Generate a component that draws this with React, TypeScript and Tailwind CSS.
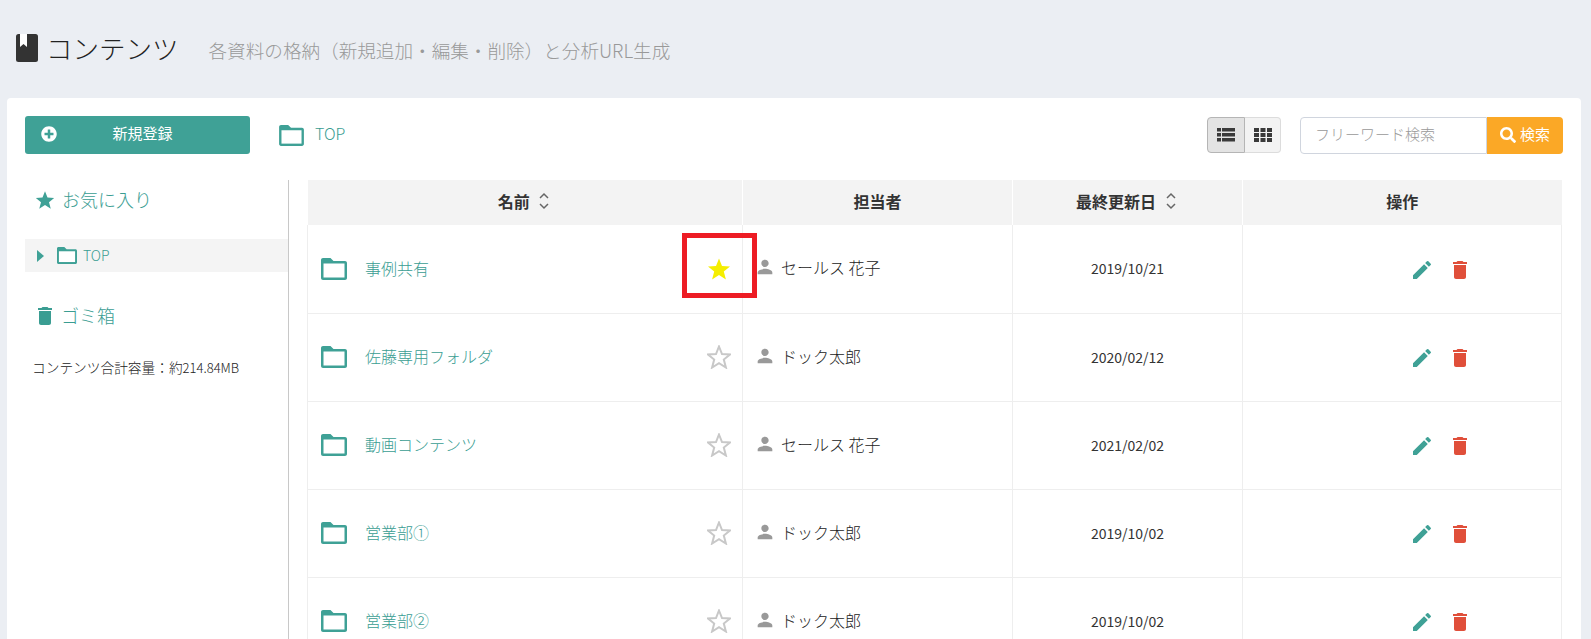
import { FaPlusCircle, FaSearch } from "react-icons/fa";
import { MdDelete, MdEdit, MdPerson } from "react-icons/md";

const rows = [
  { name: "事例共有", owner: "セールス 花子", date: "2019/10/21", fav: true },
  { name: "佐藤専用フォルダ", owner: "ドック太郎", date: "2020/02/12", fav: false },
  { name: "動画コンテンツ", owner: "セールス 花子", date: "2021/02/02", fav: false },
  { name: "営業部①", owner: "ドック太郎", date: "2019/10/02", fav: false },
  { name: "営業部②", owner: "ドック太郎", date: "2019/10/02", fav: false },
];

const starPoints = "12,1.5 15,9 23,9.500 16.800,14.600 18.900,22.500 12,18.100 5.100,22.500 7.200,14.600 1,9.500 9,9";

function FolderIcon({ className }: { className?: string }) {
  return (
    <svg viewBox="0 0 26 22" className={className} fill="none">
      <path d="M0 4V2C0 .9 .9 0 2 0h7.500l3 3H24c1.100 0 2 .9 2 2v15c0 1.100-.9 2-2 2H2c-1.100 0-2-.9-2-2V4z" fill="#3fa196" />
      <rect x="2.500" y="5.500" width="21" height="14" fill="#fff" />
    </svg>
  );
}

function SortIcon() {
  return (
    <svg viewBox="0 0 12 20" className="w-[12px] h-[20px]" fill="none" stroke="#666" strokeWidth="1.500">
      <path d="M2 7l4-4 4 4" />
      <path d="M2 13l4 4 4-4" />
    </svg>
  );
}

function BookIcon() {
  return (
    <svg viewBox="0 0 22 28" className="w-[22px] h-[28px]">
      <rect width="22" height="28" rx="2.500" fill="#333" />
      <path d="M4 0h7v13l-3.500-3L4 13z" fill="#fff" />
    </svg>
  );
}

function ListIcon() {
  return (
    <svg viewBox="0 0 18 14" className="w-[18px] h-[14px]" fill="#3a3a3a">
      <rect y="0" width="4" height="3.500" />
      <rect x="5" y="0" width="13" height="3.500" />
      <rect y="5" width="4" height="3.500" />
      <rect x="5" y="5" width="13" height="3.500" />
      <rect y="10" width="4" height="3.500" />
      <rect x="5" y="10" width="13" height="3.500" />
    </svg>
  );
}

function GridIcon() {
  return (
    <svg viewBox="0 0 18 14" className="w-[18px] h-[14px]" fill="#3a3a3a">
      {[0, 5, 10].map((y) =>
        [0, 6.500, 13].map((x) => <rect key={`${x}-${y}`} x={x} y={y} width="5" height="4" />)
      )}
    </svg>
  );
}

export default function App() {
  return (
    <div className="h-[639px] overflow-hidden bg-[#ebeef3] font-['Noto_Sans_CJK_JP','Noto_Sans',sans-serif] text-[#333]">
      <header className="h-[98px] pl-[16px] pt-[28px] flex items-start">
        <div className="flex items-center h-[40px]">
          <BookIcon />
          <h1 className="ml-[8px] text-[26.500px] font-light leading-none text-[#222]">コンテンツ</h1>
          <p className="ml-[30px] mt-[3px] text-[18.600px] font-light text-[#999]">各資料の格納（新規追加・編集・削除）と分析URL生成</p>
        </div>
      </header>

      <main className="relative ml-[7px] mr-[10px] h-[541px] bg-white rounded-t-[4px] overflow-hidden">
        <div className="flex items-center h-[38px] mt-[18px] pl-[18px] pr-[18px]">
          <button className="relative w-[225px] h-[38px] pl-[10px] pb-[3px] rounded-[3px] bg-[#3fa196] text-white text-[15px] flex items-center justify-center">
            <FaPlusCircle className="absolute left-[16px] top-[10px] text-[16px]" />
            新規登録
          </button>
          <FolderIcon className="ml-[29px] w-[25px] h-[21px]" />
          <span className="ml-[11px] pb-[4px] text-[16px] font-light text-[#3a9d92]">TOP</span>

          <div className="ml-auto flex h-[36px]">
            <div className="w-[38px] flex items-center justify-center rounded-l-[4px] border border-[#b5b5b5] bg-[#e3e3e3]">
              <ListIcon />
            </div>
            <div className="w-[36px] flex items-center justify-center rounded-r-[4px] border border-l-0 border-[#dcdcdc] bg-[#f3f3f3]">
              <GridIcon />
            </div>
          </div>

          <div className="ml-[19px] flex h-[37px]">
            <div className="w-[187px] flex items-center pl-[14px] pb-[1px] rounded-l-[4px] border border-[#d0d5de] text-[15px] font-light text-[#999]">
              フリーワード検索
            </div>
            <button className="w-[76px] flex items-center justify-center gap-[4px] pb-[1px] rounded-r-[4px] bg-[#fba826] text-white text-[15px]">
              <FaSearch className="text-[16px]" />
              検索
            </button>
          </div>
        </div>

        <div className="flex mt-[26px]">
          <aside className="w-[264px] shrink-0 ml-[18px] h-[460px] border-r border-[#c8c8c8]">
            <div className="flex items-center h-[40px] pl-[10px] text-[#3a9d92]">
              <svg viewBox="0 0 24 24" className="w-[20px] h-[20px]">
                <polygon points={starPoints} fill="#3fa196" />
              </svg>
              <span className="ml-[7px] pb-[1px] text-[18px] font-light">お気に入り</span>
            </div>
            <div className="flex items-center h-[33px] mt-[19px] pl-[12px] bg-[#f4f4f4] text-[#3a9d92]">
              <svg viewBox="0 0 7 12" className="w-[7px] h-[12px]">
                <path d="M0 0l7 6-7 6z" fill="#3fa196" />
              </svg>
              <FolderIcon className="ml-[13px] w-[20px] h-[17px]" />
              <span className="ml-[6px] text-[14px] font-light">TOP</span>
            </div>
            <div className="flex items-center h-[40px] mt-[24px] pl-[8px] text-[#3a9d92]">
              <MdDelete className="text-[24px]" />
              <span className="ml-[4px] pb-[2px] text-[18px] font-light">ゴミ箱</span>
            </div>
            <p className="mt-[21px] pl-[7px] text-[13.700px] font-light text-[#222]">
              コンテンツ合計容量：約<span className="text-[13px]">214.84MB</span>
            </p>
          </aside>

          <table className="ml-[18px] w-[1255px] table-fixed border-collapse self-start">
            <thead>
              <tr className="h-[45px] bg-[#f3f3f3] text-[16px] font-bold text-[#333]">
                <th className="w-[435px] pb-[3px]">
                  <span className="inline-flex items-center gap-[8px] -ml-[2px]">名前 <SortIcon /></span>
                </th>
                <th className="w-[270px] border-l border-white pb-[3px]">担当者</th>
                <th className="w-[230px] border-l border-white pb-[3px]">
                  <span className="inline-flex items-center gap-[9px] -ml-[2px]">最終更新日 <SortIcon /></span>
                </th>
                <th className="border-l border-white pb-[3px]">操作</th>
              </tr>
            </thead>
            <tbody>
              {rows.map((row) => (
                <tr key={row.name + row.date} className="h-[88px] border-b border-l border-[#eeeeee]">
                  <td className="border-r border-[#eeeeee]">
                    <div className="flex items-center pl-[13px] pr-[11px]">
                      <FolderIcon className="w-[26px] h-[22px]" />
                      <span className="ml-[18px] pb-[2px] text-[16px] font-light text-[#3a9d92]">{row.name}</span>
                      <svg viewBox="0 0 24 24" className="ml-auto w-[24px] h-[24px]">
                        {row.fav ? (
                          <polygon points={starPoints} fill="#f5ee00" />
                        ) : (
                          <polygon points={starPoints} fill="none" stroke="#c8c8c8" strokeWidth="2" />
                        )}
                      </svg>
                    </div>
                  </td>
                  <td className="border-r border-[#eeeeee]">
                    <div className="flex items-center pl-[11px] pb-[3px]">
                      <MdPerson className="text-[22px] text-[#999]" />
                      <span className="ml-[5px] text-[16px] font-light text-[#222]">{row.owner}</span>
                    </div>
                  </td>
                  <td className="border-r border-[#eeeeee] text-center text-[14px] text-[#333]">{row.date}</td>
                  <td className="border-r border-[#eeeeee]">
                    <div className="flex items-center pl-[167px] pt-[2px] gap-[14px]">
                      <MdEdit className="text-[24px] text-[#3fa196]" />
                      <MdDelete className="text-[24px] text-[#e04f3a]" />
                    </div>
                  </td>
                </tr>
              ))}
            </tbody>
          </table>
        </div>

        <div className="absolute left-[675px] top-[135px] w-[75px] h-[65px] border-[5px] border-[#ed1c24]" />
      </main>
    </div>
  );
}
